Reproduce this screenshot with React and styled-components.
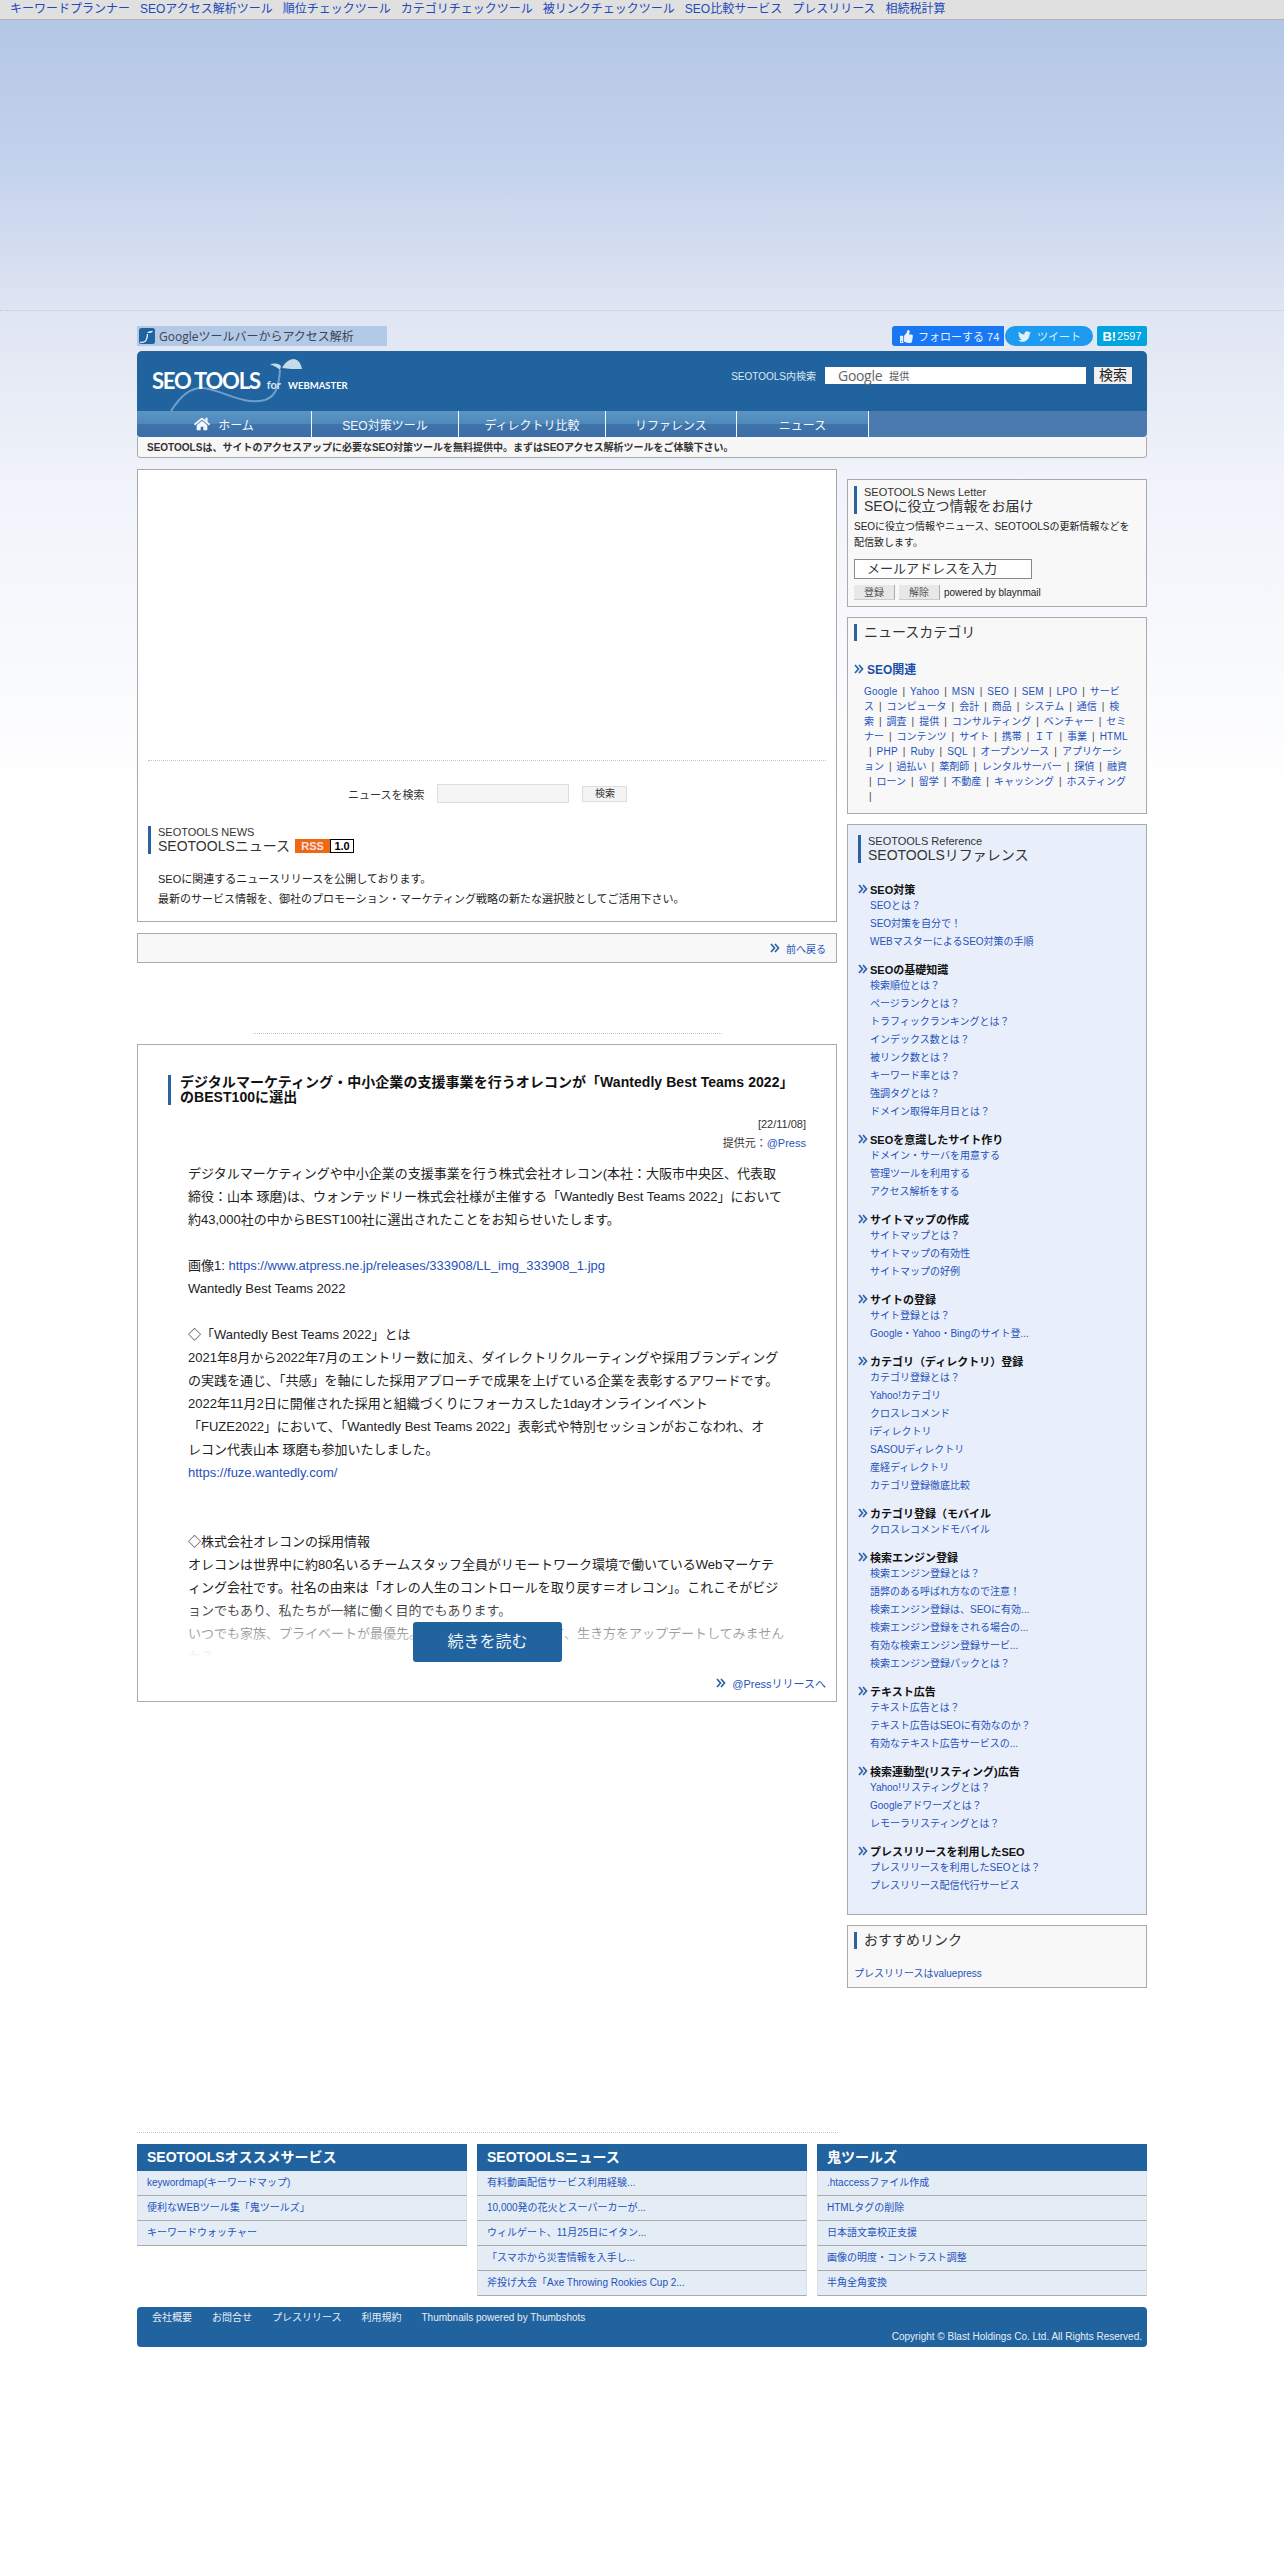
import React from 'react'
import styled, { createGlobalStyle } from 'styled-components'
import { FaHome, FaThumbsUp, FaTwitter } from 'react-icons/fa'

const FONT = `"Liberation Sans", "Noto Sans CJK JP", sans-serif`
const BLUE = '#21639f'
const LINK = '#1f52bb'

const GlobalStyles = createGlobalStyle`
  * { box-sizing: border-box; }
  html, body { margin: 0; padding: 0; }
  body {
    min-height: 2568px;
    font-family: ${FONT};
    font-size: 10px;
    color: #222;
    background: #fff;
  }
  a { color: ${LINK}; text-decoration: none; }
`

const topLinks = ['キーワードプランナー', 'SEOアクセス解析ツール', '順位チェックツール', 'カテゴリチェックツール', '被リンクチェックツール', 'SEO比較サービス', 'プレスリリース', '相続税計算']

const navItems = [
  { label: 'ホーム', width: 175, home: true },
  { label: 'SEO対策ツール', width: 147 },
  { label: 'ディレクトリ比較', width: 147 },
  { label: 'リファレンス', width: 131 },
  { label: 'ニュース', width: 132 },
]

// wrapped the same way as the page, words split across lines included
const categoryLines = [
  ['Google', 'Yahoo', 'MSN', 'SEO', 'SEM', 'LPO', 'サービ'],
  ['ス', 'コンピュータ', '会計', '商品', 'システム', '通信', '検'],
  ['索', '調査', '提供', 'コンサルティング', 'ベンチャー', 'セミ'],
  ['ナー', 'コンテンツ', 'サイト', '携帯', 'ＩＴ', '事業', 'HTML'],
  ['', 'PHP', 'Ruby', 'SQL', 'オープンソース', 'アプリケーシ'],
  ['ョン', '過払い', '薬剤師', 'レンタルサーバー', '探偵', '融資'],
  ['', 'ローン', '留学', '不動産', 'キャッシング', 'ホスティング'],
  ['', ''],
]

const reference = [
  { title: 'SEO対策', links: ['SEOとは？', 'SEO対策を自分で！', 'WEBマスターによるSEO対策の手順'] },
  { title: 'SEOの基礎知識', links: ['検索順位とは？', 'ページランクとは？', 'トラフィックランキングとは？', 'インデックス数とは？', '被リンク数とは？', 'キーワード率とは？', '強調タグとは？', 'ドメイン取得年月日とは？'] },
  { title: 'SEOを意識したサイト作り', links: ['ドメイン・サーバを用意する', '管理ツールを利用する', 'アクセス解析をする'] },
  { title: 'サイトマップの作成', links: ['サイトマップとは？', 'サイトマップの有効性', 'サイトマップの好例'] },
  { title: 'サイトの登録', links: ['サイト登録とは？', 'Google・Yahoo・Bingのサイト登...'] },
  { title: 'カテゴリ（ディレクトリ）登録', links: ['カテゴリ登録とは？', 'Yahoo!カテゴリ', 'クロスレコメンド', 'iディレクトリ', 'SASOUディレクトリ', '産経ディレクトリ', 'カテゴリ登録徹底比較'] },
  { title: 'カテゴリ登録（モバイル', links: ['クロスレコメンドモバイル'] },
  { title: '検索エンジン登録', links: ['検索エンジン登録とは？', '語弊のある呼ばれ方なので注意！', '検索エンジン登録は、SEOに有効...', '検索エンジン登録をされる場合の...', '有効な検索エンジン登録サービ...', '検索エンジン登録パックとは？'] },
  { title: 'テキスト広告', links: ['テキスト広告とは？', 'テキスト広告はSEOに有効なのか？', '有効なテキスト広告サービスの...'] },
  { title: '検索連動型(リスティング)広告', links: ['Yahoo!リスティングとは？', 'Googleアドワーズとは？', 'レモーラリスティングとは？'] },
  { title: 'プレスリリースを利用したSEO', links: ['プレスリリースを利用したSEOとは？', 'プレスリリース配信代行サービス'] },
]

const footerColumns = [
  { title: 'SEOTOOLSオススメサービス', links: ['keywordmap(キーワードマップ)', '便利なWEBツール集「鬼ツールズ」', 'キーワードウォッチャー'] },
  { title: 'SEOTOOLSニュース', links: ['有料動画配信サービス利用経験...', '10,000発の花火とスーパーカーが...', 'ウィルゲート、11月25日にイタン...', '「スマホから災害情報を入手し...', '斧投げ大会「Axe Throwing Rookies Cup 2...'] },
  { title: '鬼ツールズ', links: ['.htaccessファイル作成', 'HTMLタグの削除', '日本語文章校正支援', '画像の明度・コントラスト調整', '半角全角変換'] },
]

const Chevrons = ({ size = 10 }) => (
  <ChevronSvg width={size} height={size} viewBox="0 0 10 10">
    <path d="M1 1 L4.5 5 L1 9 M5 1 L8.5 5 L5 9" fill="none" stroke="#2a64a8" strokeWidth="1.7" />
  </ChevronSvg>
)

const Heading = ({ small, children }) => (
  <HeadingWrap>
    {small && <HeadingSmall>{small}</HeadingSmall>}
    <HeadingBig>{children}</HeadingBig>
  </HeadingWrap>
)

const App = () => {
  return (
    <>
      <GlobalStyles />
      <TopBar>
        {topLinks.map((t) => <TopLink href="#" key={t}>{t}</TopLink>)}
      </TopBar>
      <Hero>
        <AdBand />
        <Wrapper>
          <ToolRow>
            <ToolbarLink>
              <svg width="16" height="16" viewBox="0 0 16 16">
                <rect width="16" height="16" rx="2.5" fill="#21639f" />
                <path d="M1 14c4 1 7 0 7.500-8" fill="none" stroke="#fff" strokeWidth="1.200" />
                <path d="M8 5c2-2 4-2 6-2-1 2-4 2-6 2z" fill="#fff" />
              </svg>
              Googleツールバーからアクセス解析
            </ToolbarLink>
            <Social>
              <FollowButton><FaThumbsUp size={13} /><span>フォローする 74</span></FollowButton>
              <TweetButton><FaTwitter size={13} /><span>ツイート</span></TweetButton>
              <HatenaButton><b>B!</b> 2597</HatenaButton>
            </Social>
          </ToolRow>

          <Header>
            <Logo>
              <LogoMark width="170" height="60" viewBox="0 0 170 60">
                <path d="M34 60C42 47 52 36 66 37c20 2 40 18 62 12 12-4 14-16 15-30" fill="none" stroke="#6f9fca" strokeWidth="2" />
                <path d="M143 19c-3-3-7-5-10-5 3-2 8-2 11 1z" fill="#c4d9ea" />
                <path d="M145 17c3-6 8-9 12-9 5 1 7 5 8 10-7 0-14 0-20-1z" fill="#c4d9ea" />
              </LogoMark>
              <LogoText>SEO TOOLS</LogoText>
              <LogoFor>for</LogoFor>
              <LogoSub>WEBMASTER</LogoSub>
            </Logo>
            <SiteSearch>
              <SearchLabel>SEOTOOLS内検索</SearchLabel>
              <GoogleInput><GoogleWord>Google</GoogleWord><GoogleBy>提供</GoogleBy></GoogleInput>
              <SearchButton>検索</SearchButton>
            </SiteSearch>
          </Header>
          <Nav>
            {navItems.map((n) => (
              <NavItem key={n.label} $width={n.width}>
                {n.home && <FaHome size={16} />}
                <span>{n.label}</span>
              </NavItem>
            ))}
          </Nav>
          <Lead>SEOTOOLSは、サイトのアクセスアップに必要なSEO対策ツールを無料提供中。まずはSEOアクセス解析ツールをご体験下さい。</Lead>

          <Columns>
            <MainColumn>
              <Panel>
                <AdSlot />
                <NewsSearch>
                  <span>ニュースを検索</span>
                  <NewsInput />
                  <NewsButton>検索</NewsButton>
                </NewsSearch>
                <NewsHeading>
                  <Heading small="SEOTOOLS NEWS">
                    SEOTOOLSニュース
                    <Rss><RssLeft>RSS</RssLeft><RssRight>1.0</RssRight></Rss>
                  </Heading>
                </NewsHeading>
                <NewsIntro>
                  SEOに関連するニュースリリースを公開しております。<br />
                  最新のサービス情報を、御社のプロモーション・マーケティング戦略の新たな選択肢としてご活用下さい。
                </NewsIntro>
              </Panel>

              <BackBar>
                <Chevrons /><a href="#">前へ戻る</a>
              </BackBar>

              <DottedLine $width={469} $top={70} />

              <Article>
                <ArticleTitle>
                  デジタルマーケティング・中小企業の支援事業を行うオレコンが「Wantedly Best Teams 2022」<br />
                  のBEST100に選出
                </ArticleTitle>
                <ArticleMeta>
                  <div>[22/11/08]</div>
                  <div>提供元：<a href="#">@Press</a></div>
                </ArticleMeta>
                <ArticleBody>
                  デジタルマーケティングや中小企業の支援事業を行う株式会社オレコン(本社：大阪市中央区、代表取<br />
                  締役：山本 琢磨)は、ウォンテッドリー株式会社様が主催する「Wantedly Best Teams 2022」において<br />
                  約43,000社の中からBEST100社に選出されたことをお知らせいたします。<br />
                  <br />
                  画像1: <a href="#">https://www.atpress.ne.jp/releases/333908/LL_img_333908_1.jpg</a><br />
                  Wantedly Best Teams 2022<br />
                  <br />
                  ◇「Wantedly Best Teams 2022」とは<br />
                  2021年8月から2022年7月のエントリー数に加え、ダイレクトリクルーティングや採用ブランディング<br />
                  の実践を通じ、「共感」を軸にした採用アプローチで成果を上げている企業を表彰するアワードです。<br />
                  2022年11月2日に開催された採用と組織づくりにフォーカスした1dayオンラインイベント<br />
                  「FUZE2022」において、「Wantedly Best Teams 2022」表彰式や特別セッションがおこなわれ、オ<br />
                  レコン代表山本 琢磨も参加いたしました。<br />
                  <a href="#">https://fuze.wantedly.com/</a><br />
                  <br />
                  <br />
                  ◇株式会社オレコンの採用情報<br />
                  オレコンは世界中に約80名いるチームスタッフ全員がリモートワーク環境で働いているWebマーケテ<br />
                  ィング会社です。社名の由来は「オレの人生のコントロールを取り戻す＝オレコン」。これこそがビジ<br />
                  ョンでもあり、私たちが一緒に働く目的でもあります。<br />
                  いつでも家族、プライベートが最優先。そんな働き方を実現して、生き方をアップデートしてみません<br />
                  か？
                  <BodyFade />
                  <ReadMore>続きを読む</ReadMore>
                </ArticleBody>
                <ArticleFoot>
                  <Chevrons /><a href="#">@Pressリリースへ</a>
                </ArticleFoot>
              </Article>
            </MainColumn>

            <SideColumn>
              <SideBox>
                <Heading small="SEOTOOLS News Letter">SEOに役立つ情報をお届け</Heading>
                <SideText>SEOに役立つ情報やニュース、SEOTOOLSの更新情報などを<br />配信致します。</SideText>
                <MailInput>メールアドレスを入力</MailInput>
                <MailActions>
                  <MailButton>登録</MailButton>
                  <MailButton>解除</MailButton>
                  <span>powered by blaynmail</span>
                </MailActions>
              </SideBox>

              <SideBox>
                <Heading>ニュースカテゴリ</Heading>
                <CategoryTitle><Chevrons /><a href="#">SEO関連</a></CategoryTitle>
                <CategoryList>
                  {categoryLines.map((line, i) => (
                    <CategoryLine key={i}>
                      {line.map((c, j) => (
                        <React.Fragment key={j}>
                          {j > 0 && <Sep>|</Sep>}
                          {c && <CategoryLink href="#" $latin={/^[A-Za-z]+$/.test(c)}>{c}</CategoryLink>}
                        </React.Fragment>
                      ))}
                    </CategoryLine>
                  ))}
                </CategoryList>
              </SideBox>

              <ReferenceBox>
                <Heading small="SEOTOOLS Reference">SEOTOOLSリファレンス</Heading>
                <RefList>
                  {reference.map((s) => (
                    <RefSection key={s.title}>
                      <RefTitle><Chevrons />{s.title}</RefTitle>
                      {s.links.map((l) => <RefLink href="#" key={l}>{l}</RefLink>)}
                    </RefSection>
                  ))}
                </RefList>
              </ReferenceBox>

              <SideBox>
                <Heading>おすすめリンク</Heading>
                <Recommend href="#">プレスリリースはvaluepress</Recommend>
              </SideBox>
            </SideColumn>
          </Columns>

          <DottedLine $width={701} $top={144} />

          <FooterColumns>
            {footerColumns.map((col) => (
              <div key={col.title}>
                <FooterHead>{col.title}</FooterHead>
                {col.links.map((l) => <FooterRow key={l}><a href="#">{l}</a></FooterRow>)}
              </div>
            ))}
          </FooterColumns>

          <Footer>
            <FooterLinks>
              <span>会社概要</span>
              <span>お問合せ</span>
              <span>プレスリリース</span>
              <span>利用規約</span>
              <span>Thumbnails powered by Thumbshots</span>
            </FooterLinks>
            <Copyright>Copyright © Blast Holdings Co. Ltd. All Rights Reserved.</Copyright>
          </Footer>
        </Wrapper>
      </Hero>
    </>
  )
}

export default App

const TopBar = styled.div`
  height: 20px;
  background: #e0e0e0;
  border-bottom: 1px solid #b4b4b4;
  padding-left: 10px;
  display: flex;
  align-items: center;
  gap: 10px;
  font-size: 12px;
`
const TopLink = styled.a`
  color: #2349b8;
  line-height: 19px;
`
const Hero = styled.div`
  background: linear-gradient(180deg, #b3c7e6 0, #c4d3ec 150px, #dfe5f2 290px, #f0f3fa 460px, #fff 780px);
  background-repeat: no-repeat;
`
const AdBand = styled.div`
  height: 291px;
  border-bottom: 1px dotted #c2c8d6;
`
const Wrapper = styled.div`
  width: 1010px;
  margin: 0 0 0 137px;
`
const ToolRow = styled.div`
  display: flex;
  justify-content: space-between;
  padding-top: 15px;
  height: 40px;
`
const ToolbarLink = styled.div`
  width: 250px;
  height: 20px;
  background: #b3c9e8;
  display: flex;
  align-items: center;
  gap: 4px;
  padding-left: 2px;
  font-family: "Open Sans", "Noto Sans CJK JP", sans-serif;
  font-size: 12px;
  color: #3c4450;
`
const Social = styled.div`
  display: flex;
  height: 20px;
  font-size: 11px;
  color: #fff;
`
const FollowButton = styled.div`
  width: 112px;
  background: #1877f2;
  border-radius: 3px 0 0 3px;
  display: flex;
  align-items: center;
  gap: 5px;
  padding-left: 8px;
  white-space: nowrap;
  color: #e8f1ff;
`
const TweetButton = styled.div`
  width: 88px;
  margin-left: 1px;
  background: #1d9bf0;
  border-radius: 10px;
  display: flex;
  align-items: center;
  gap: 6px;
  padding-left: 13px;
  color: #dff1fd;
`
const HatenaButton = styled.div`
  width: 50px;
  margin-left: 4px;
  background: #00a4de;
  border-radius: 2px;
  display: flex;
  align-items: center;
  justify-content: center;
  font-size: 11px;
  gap: 1px;
  b { font-size: 13px; }
`
const Header = styled.div`
  height: 60px;
  background: ${BLUE};
  border-radius: 5px 5px 0 0;
  display: flex;
  justify-content: space-between;
`
const Logo = styled.div`
  position: relative;
  width: 240px;
  height: 60px;
  color: #fff;
  display: flex;
  align-items: baseline;
  padding: 15px 0 0 15px;
`
const LogoMark = styled.svg`
  position: absolute;
  left: 0;
  top: 0;
`
const LogoText = styled.span`
  position: relative;
  font-family: Lato, sans-serif;
  font-weight: 700;
  font-size: 22px;
  letter-spacing: -1.2px;
  line-height: 30px;
`
const LogoFor = styled.span`
  position: relative;
  font-family: Lato, sans-serif;
  font-weight: 700;
  font-size: 11px;
  margin-left: 7px;
  color: #dbe8f3;
`
const LogoSub = styled.span`
  position: relative;
  font-family: Lato, sans-serif;
  font-weight: 700;
  font-size: 9.500px;
  margin-left: 7px;
`
const SiteSearch = styled.div`
  display: flex;
  align-items: flex-start;
  padding: 16px 15px 0 0;
`
const SearchLabel = styled.span`
  font-size: 10px;
  color: #dfe9f3;
  line-height: 20px;
  margin-right: 9px;
`
const GoogleInput = styled.div`
  width: 261px;
  height: 17px;
  background: #fff;
  display: flex;
  align-items: center;
  padding-left: 13px;
  gap: 7px;
`
const GoogleWord = styled.span`
  font-family: "Open Sans", sans-serif;
  font-size: 14px;
  color: #666;
  letter-spacing: -0.3px;
`
const GoogleBy = styled.span`
  font-size: 10px;
  color: #555;
`
const SearchButton = styled.div`
  width: 38px;
  height: 17px;
  margin-left: 8px;
  background: #f0f0f0;
  color: #222;
  font-size: 14px;
  line-height: 17px;
  text-align: center;
`
const Nav = styled.div`
  height: 26px;
  display: flex;
  background: #4a7aae;
  border-radius: 0 0 4px 4px;
`
const NavItem = styled.div`
  width: ${(p) => p.$width}px;
  border-right: 1px solid #f2f6fa;
  background: linear-gradient(180deg, #5a95c4 0, #4f89bb 50%, #3f74aa 52%, #3b6da6 100%);
  color: #f4f8fc;
  font-size: 12px;
  display: flex;
  align-items: center;
  justify-content: center;
  gap: 8px;
  &:first-child { border-radius: 0 0 0 4px; }
`
const Lead = styled.div`
  height: 21px;
  padding: 2px 0 0 9px;
  background: #f7f7f7;
  border: 1px solid #aaa;
  border-top: 0;
  border-radius: 0 0 4px 4px;
  font-size: 10px;
  font-weight: 700;
  line-height: 18px;
  color: #333;
`
const Columns = styled.div`
  display: grid;
  grid-template-columns: 700px 300px;
  gap: 10px;
  margin-top: 11px;
  align-items: start;
`
const MainColumn = styled.div``
const SideColumn = styled.div`
  padding-top: 10px;
  display: flex;
  flex-direction: column;
  gap: 10px;
`
const Panel = styled.div`
  height: 453px;
  background: #fff;
  border: 1px solid #aaa;
`
const AdSlot = styled.div`
  height: 291px;
  margin: 0 10px;
  border-bottom: 1px dotted #c4c4c4;
`
const NewsSearch = styled.div`
  display: flex;
  align-items: center;
  margin-top: 23px;
  padding-left: 210px;
  font-size: 11px;
  color: #333;
  height: 19px;
`
const NewsInput = styled.div`
  width: 132px;
  height: 19px;
  margin-left: 13px;
  background: #f5f5f5;
  border: 1px solid #ddd;
`
const NewsButton = styled.div`
  width: 45px;
  height: 16px;
  margin-left: 13px;
  background: #f4f4f4;
  border: 1px solid #ddd;
  text-align: center;
  font-size: 10px;
  line-height: 14px;
`
const NewsHeading = styled.div`
  margin: 23px 0 0 10px;
`
const NewsIntro = styled.div`
  margin: 15px 0 0 20px;
  font-size: 11px;
  line-height: 20px;
  color: #222;
`
const HeadingWrap = styled.div`
  border-left: 3px solid #2a64a0;
  padding-left: 7px;
  min-height: 17px;
  color: #333;
`
const HeadingSmall = styled.div`
  font-size: 11px;
  line-height: 12px;
`
const HeadingBig = styled.div`
  font-size: 14px;
  line-height: 16px;
  display: flex;
  align-items: center;
`
const Rss = styled.span`
  display: inline-flex;
  margin-left: 5px;
  height: 14px;
  font-size: 11px;
  font-weight: 700;
`
const RssLeft = styled.span`
  width: 35px;
  background: #ee6a10;
  color: #fde;
  text-align: center;
  line-height: 14px;
`
const RssRight = styled.span`
  width: 24px;
  background: #fff;
  border: 1px solid #000;
  color: #000;
  text-align: center;
  line-height: 12px;
`
const BackBar = styled.div`
  height: 30px;
  margin-top: 11px;
  background: #f8f8f8;
  border: 1px solid #aaa;
  display: flex;
  align-items: center;
  justify-content: flex-end;
  gap: 6px;
  padding-right: 10px;
  font-size: 10px;
`
const DottedLine = styled.div`
  width: ${(p) => p.$width}px;
  margin: ${(p) => p.$top}px auto 0;
  border-bottom: 1px dotted #c4c4c4;
  ${(p) => p.$width > 700 && 'margin-left: 0;'}
`
const Article = styled.div`
  height: 658px;
  margin-top: 10px;
  background: #fff;
  border: 1px solid #aaa;
  padding-top: 30px;
`
const ArticleTitle = styled.h2`
  margin: 0 0 0 30px;
  padding-left: 9px;
  border-left: 3px solid #2a64a0;
  font-size: 14px;
  font-weight: 700;
  line-height: 15px;
  letter-spacing: 0.05px;
  color: #111;
`
const ArticleMeta = styled.div`
  margin: 10px 30px 0 0;
  text-align: right;
  font-size: 11px;
  line-height: 19px;
  color: #333;
`
const ArticleBody = styled.div`
  position: relative;
  height: 508px;
  margin-top: 9px;
  padding: 0 0 0 50px;
  font-size: 13px;
  line-height: 23px;
  color: #222;
  overflow: hidden;
  white-space: nowrap;
`
const BodyFade = styled.div`
  position: absolute;
  left: 0;
  right: 0;
  bottom: 0;
  height: 70px;
  background: linear-gradient(180deg, rgba(255, 255, 255, 0), #fff 82%);
`
const ReadMore = styled.div`
  position: absolute;
  left: 275px;
  bottom: 8px;
  width: 149px;
  height: 40px;
  background: ${BLUE};
  border-radius: 3px;
  color: #eef4fa;
  font-size: 16px;
  line-height: 40px;
  text-align: center;
`
const ArticleFoot = styled.div`
  display: flex;
  align-items: center;
  justify-content: flex-end;
  gap: 6px;
  margin-top: 5px;
  padding-right: 10px;
  font-size: 11px;
`
const ChevronSvg = styled.svg`
  flex: none;
`
const SideBox = styled.div`
  background: #f8f8f8;
  border: 1px solid #aaa;
  padding: 6px;
`
const SideText = styled.div`
  margin-top: 5px;
  font-size: 10px;
  line-height: 16px;
  color: #222;
`
const MailInput = styled.div`
  width: 178px;
  height: 20px;
  margin-top: 8px;
  background: #fff;
  border: 1px solid #888;
  padding-left: 12px;
  font-size: 13px;
  line-height: 18px;
  color: #333;
`
const MailActions = styled.div`
  display: flex;
  align-items: center;
  gap: 4px;
  margin-top: 6px;
  font-size: 10px;
  color: #222;
`
const MailButton = styled.div`
  width: 41px;
  height: 15px;
  background: #e8e8e8;
  border-right: 1px solid #aaa;
  border-bottom: 1px solid #ccc;
  text-align: center;
  line-height: 15px;
  color: #555;
`
const CategoryTitle = styled.div`
  display: flex;
  align-items: center;
  gap: 3px;
  margin-top: 19px;
  font-size: 12px;
  font-weight: 700;
  a { color: #1a4fa8; }
`
const CategoryList = styled.div`
  margin: 7px 0 3px 10px;
  font-size: 10px;
  line-height: 15px;
  color: #444;
`
const CategoryLine = styled.div`
  height: 15px;
  white-space: nowrap;
`
const Sep = styled.span`
  margin: 0 5px;
`
const CategoryLink = styled.a`
  letter-spacing: ${(p) => (p.$latin ? '0.2px' : '0')};
`
const ReferenceBox = styled(SideBox)`
  background: #e9effa;
  padding: 10px 10px 19px 10px;
`
const RefList = styled.div`
  padding-top: 8px;
`
const RefSection = styled.div`
  margin-top: 9px;
`
const RefTitle = styled.div`
  display: flex;
  align-items: center;
  gap: 2px;
  height: 17px;
  font-size: 11px;
  font-weight: 700;
  color: #111;
`
const RefLink = styled.a`
  display: block;
  margin-left: 12px;
  font-size: 10px;
  line-height: 18px;
`
const Recommend = styled.a`
  display: block;
  margin-top: 18px;
  font-size: 10px;
  line-height: 14px;
`
const FooterColumns = styled.div`
  display: grid;
  grid-template-columns: repeat(3, 330px);
  gap: 10px;
  margin-top: 11px;
`
const FooterHead = styled.div`
  height: 27px;
  background: ${BLUE};
  color: #fff;
  font-size: 14px;
  font-weight: 700;
  line-height: 27px;
  padding-left: 10px;
`
const FooterRow = styled.div`
  height: 25px;
  background: #e4ecf6;
  border-bottom: 1px solid #aaa;
  border-left: 1px solid #ddd;
  border-right: 1px solid #ddd;
  padding-left: 9px;
  font-size: 10px;
  line-height: 24px;
`
const Footer = styled.div`
  height: 40px;
  margin-top: 11px;
  background: ${BLUE};
  border-radius: 4px;
  color: #e6eef6;
  font-size: 10px;
  padding: 5px 5px 0 15px;
`
const FooterLinks = styled.div`
  display: flex;
  gap: 20px;
  line-height: 12px;
`
const Copyright = styled.div`
  margin-top: 7px;
  text-align: right;
  line-height: 12px;
`
